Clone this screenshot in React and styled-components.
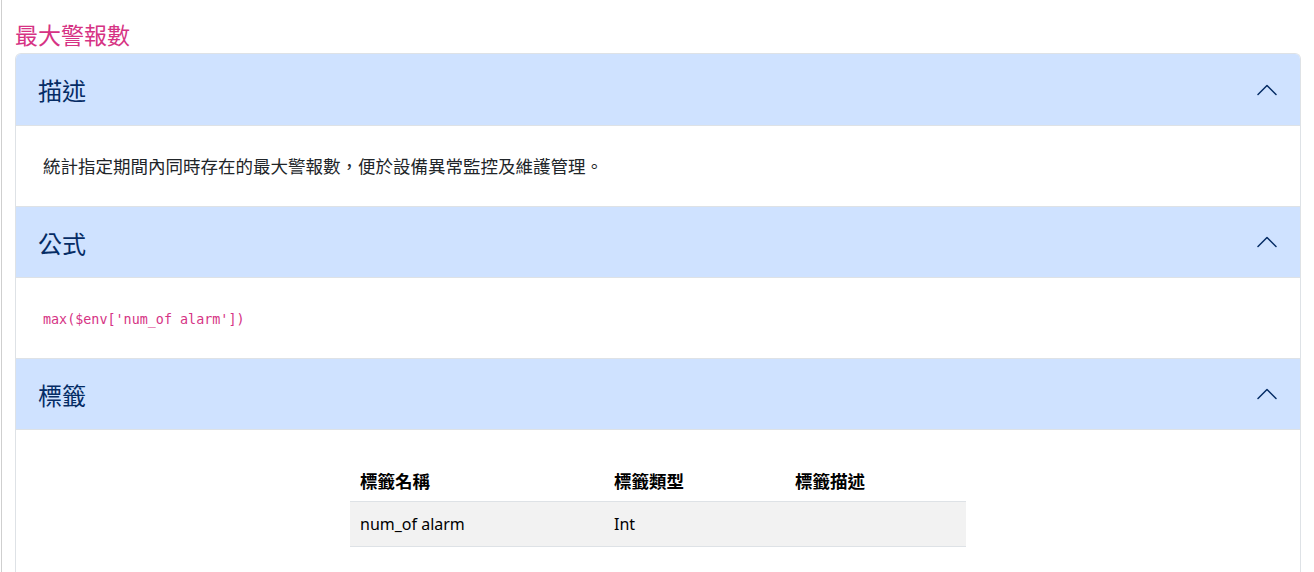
import React from 'react'
import styled, { createGlobalStyle } from 'styled-components'

const GlobalStyle = createGlobalStyle`
    html, body {
        margin:0;
        padding:0;
        background:#fff;
    }
    body {
        font-family: "Noto Sans", "Noto Sans CJK TC", sans-serif;
        color:#212529;
    }
`;

const Page = styled.div`
    min-height:572px;
    box-sizing:border-box;
    margin-left:1px;
    border-left:1px solid #cfcfcf;
    padding:18px 13px 0 13px;
`;

const Title = styled.h2`
    margin:0 0 3px 0;
    font-family: "Noto Sans CJK TC", sans-serif;
    font-weight:400;
    font-size:23px;
    line-height:32px;
    color:#d63384;
`;

const Accordion = styled.div`
    border:1px solid #dee2e6;
    border-bottom:none;
    border-radius:6px 6px 0 0;
    overflow:hidden;
`;

const Header = styled.div`
    display:flex;
    align-items:center;
    justify-content:space-between;
    height:72px;
    box-sizing:border-box;
    padding:0 21px 0 22px;
    background:#cfe2ff;
    color:#052c65;
    font-family: "Noto Sans CJK TC", sans-serif;
    font-size:24px;
    border-top:${p => (p.$first ? 'none' : '1px solid #dee2e6')};
    border-bottom:1px solid #dee2e6;
`;

const Chevron = () => (
    <svg width="24" height="24" viewBox="0 0 16 16" fill="none" stroke="#052c65"
        strokeWidth="1" strokeLinecap="round" strokeLinejoin="round">
        <path d="M2 11L8 5L14 11" />
    </svg>
);

const Body = styled.div`
    height:${p => p.$h || 'auto'};
    box-sizing:border-box;
    padding:${p => p.$pad || '28px 27px'};
    font-size:16px;
    line-height:24px;
`;

const Text = styled.p`
    margin:0;
    font-family: "Noto Sans CJK TC", sans-serif;
    font-size:17.5px;
    line-height:24px;
    height:24px;
`;

const Code = styled.code`
    display:block;
    font-family: "DejaVu Sans Mono", monospace;
    font-size:13.4px;
    line-height:24px;
    height:24px;
    color:#d63384;
`;

const Table = styled.table`
    width:616px;
    margin:0 auto;
    border-collapse:collapse;
`;

const Th = styled.th`
    text-align:left;
    font-family: "Noto Sans CJK TC", sans-serif;
    font-weight:700;
    font-size:17.5px;
    color:#000;
    padding:4px 10px 8px;
    height:36px;
    box-sizing:border-box;
    border-bottom:1px solid #dee2e6;
    width:${p => p.$w};
`;

const Td = styled.td`
    padding:10px 10px;
    height:45px;
    box-sizing:border-box;
    font-size:16px;
    color:#000;
    background:#f2f2f2;
    border-bottom:1px solid #dee2e6;
`;

const Section = ({ title, first, children, pad, h }) => (
    <>
        <Header $first={first}>
            <span>{title}</span>
            <Chevron />
        </Header>
        <Body $pad={pad} $h={h}>{children}</Body>
    </>
);

export default function App() {
    return (
        <>
            <GlobalStyle />
            <Page>
                <Title>最大警報數</Title>
                <Accordion>
                    <Section title="描述" first h="80px">
                        <Text>統計指定期間內同時存在的最大警報數，便於設備異常監控及維護管理。</Text>
                    </Section>
                    <Section title="公式" h="80px" pad="30px 27px 26px">
                        <Code>max($env['num_of alarm'])</Code>
                    </Section>
                    <Section title="標籤" pad="35px 27px 28px">
                        <Table>
                            <thead>
                                <tr>
                                    <Th $w="254px">標籤名稱</Th>
                                    <Th $w="181px">標籤類型</Th>
                                    <Th $w="181px">標籤描述</Th>
                                </tr>
                            </thead>
                            <tbody>
                                <tr>
                                    <Td>num_of alarm</Td>
                                    <Td>Int</Td>
                                    <Td></Td>
                                </tr>
                            </tbody>
                        </Table>
                    </Section>
                </Accordion>
            </Page>
        </>
    )
}
